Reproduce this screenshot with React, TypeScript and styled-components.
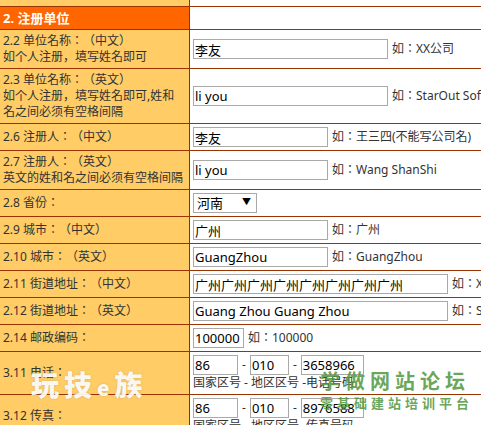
import styled, { createGlobalStyle } from "styled-components";

const FONT = `"Noto Sans", "Noto Sans CJK JP", "Noto Sans CJK SC", sans-serif`;

const GlobalStyle = createGlobalStyle`
  html, body {
    margin: 0;
    padding: 0;
    background: #fff;
    overflow: hidden;
  }
  body {
    font-family: ${FONT};
    font-size: 12px;
    color: #333;
    text-spacing-trim: space-all;
  }
  input, select {
    text-spacing-trim: space-all;
  }
`;

const Page = styled.div`
  position: relative;
  width: 481px;
  height: 425px;
  overflow: hidden;
`;

const FormTable = styled.section`
  display: grid;
  grid-template-columns: 189px 560px;
  gap: 1px;
  padding: 1px;
  margin: -17px 0 0 -1px;
  width: max-content;
  background-color: #993300;
`;

const Label = styled.div<{ $head?: boolean }>`
  display: flex;
  flex-direction: column;
  justify-content: center;
  min-height: 16px;
  padding: 3px;
  line-height: 16px;
  background-color: ${({ $head }) => ($head ? "#ff6600" : "#ffcc66")};
  color: ${({ $head }) => ($head ? "#fff" : "#333")};
  font-size: ${({ $head }) => ($head ? "13px" : "12px")};
  font-weight: ${({ $head }) => ($head ? "bold" : "normal")};
`;

const Field = styled.div`
  display: flex;
  flex-direction: column;
  justify-content: center;
  padding: 3px;
  background-color: #fff;
  line-height: 16px;
  white-space: nowrap;
`;

const Line = styled.div`
  display: flex;
  align-items: center;
  gap: 4px;
`;

const TextBox = styled.input<{ $w: number }>`
  box-sizing: border-box;
  width: ${({ $w }) => $w}px;
  height: 20px;
  margin: 0;
  padding: 0 1px;
  border: 1px solid #a9a9a9;
  background: #fff;
  color: #000;
  font-family: ${FONT};
  font-size: 13px;
  outline: none;
`;

const SelectWrap = styled.span`
  position: relative;
  display: inline-flex;
`;

const Select = styled.select`
  box-sizing: border-box;
  width: 64px;
  height: 20px;
  margin: 0;
  padding: 0 3px;
  border: 1px solid #a9a9a9;
  border-radius: 0;
  background: #fff;
  color: #000;
  font-family: ${FONT};
  font-size: 13px;
  appearance: none;
  outline: none;
`;

const Arrow = styled.span`
  position: absolute;
  right: 6px;
  top: 4px;
  font-size: 9px;
  line-height: 10px;
  color: #000;
  pointer-events: none;
`;

const Hint = styled.span`
  color: #333;
  font-size: 12px;
`;

const BrandMark = styled.div`
  position: absolute;
  left: 31px;
  top: 364px;
  font-family: "Noto Sans CJK SC", sans-serif;
  font-size: 28px;
  font-weight: 900;
  letter-spacing: 5px;
  color: rgba(255, 255, 255, 0.92);
  text-shadow: 0 0 2px rgba(120, 120, 120, 0.35);

  small {
    font-size: 21px;
  }
`;

const SiteMark = styled.div`
  position: absolute;
  left: 320px;
  top: 368px;
  font-family: "Noto Sans CJK SC", sans-serif;
  color: rgba(80, 150, 60, 0.85);
  font-weight: bold;
`;

const SiteTitle = styled.div`
  font-size: 20px;
  line-height: 26px;
  letter-spacing: 5px;
`;

const SiteSub = styled.div`
  font-size: 13px;
  line-height: 18px;
  letter-spacing: 4px;
`;

type Row = {
  label: string[];
  field: React.ReactNode;
};

const rows: Row[] = [
  {
    label: ["2.2 单位名称：（中文）", "如个人注册，填写姓名即可"],
    field: (
      <Line>
        <TextBox $w={195} defaultValue="李友" />
        <Hint>如：XX公司</Hint>
      </Line>
    ),
  },
  {
    label: ["2.3 单位名称：（英文）", "如个人注册，填写姓名即可,姓和", "名之间必须有空格间隔"],
    field: (
      <Line>
        <TextBox $w={195} defaultValue="li you" />
        <Hint>如：StarOut Software</Hint>
      </Line>
    ),
  },
  {
    label: ["2.6 注册人：（中文）"],
    field: (
      <Line>
        <TextBox $w={135} defaultValue="李友" />
        <Hint>如：王三四(不能写公司名)</Hint>
      </Line>
    ),
  },
  {
    label: ["2.7 注册人：（英文）", "英文的姓和名之间必须有空格间隔"],
    field: (
      <Line>
        <TextBox $w={135} defaultValue="li you" />
        <Hint>如：Wang ShanShi</Hint>
      </Line>
    ),
  },
  {
    label: ["2.8 省份："],
    field: (
      <Line>
        <SelectWrap>
          <Select defaultValue="河南">
            <option>河南</option>
            <option>广东</option>
          </Select>
          <Arrow>▼</Arrow>
        </SelectWrap>
      </Line>
    ),
  },
  {
    label: ["2.9 城市：（中文）"],
    field: (
      <Line>
        <TextBox $w={135} defaultValue="广州" />
        <Hint>如：广州</Hint>
      </Line>
    ),
  },
  {
    label: ["2.10 城市：（英文）"],
    field: (
      <Line>
        <TextBox $w={135} defaultValue="GuangZhou" />
        <Hint>如：GuangZhou</Hint>
      </Line>
    ),
  },
  {
    label: ["2.11 街道地址：（中文）"],
    field: (
      <Line>
        <TextBox $w={255} defaultValue="广州广州广州广州广州广州广州广州" />
        <Hint>如：XX市XX区XX路XX号</Hint>
      </Line>
    ),
  },
  {
    label: ["2.12 街道地址：（英文）"],
    field: (
      <Line>
        <TextBox $w={255} defaultValue="Guang Zhou Guang Zhou" />
        <Hint>如：Shiqiao Road</Hint>
      </Line>
    ),
  },
  {
    label: ["2.14 邮政编码："],
    field: (
      <Line>
        <TextBox $w={51} defaultValue="100000" />
        <Hint>如：100000</Hint>
      </Line>
    ),
  },
  {
    label: ["3.11 电话："],
    field: (
      <>
        <Line>
          <TextBox $w={45} defaultValue="86" />
          <Hint>-</Hint>
          <TextBox $w={39} defaultValue="010" />
          <Hint>-</Hint>
          <TextBox $w={63} defaultValue="3658966" />
        </Line>
        <Hint>国家区号 - 地区区号 -电话号码</Hint>
      </>
    ),
  },
  {
    label: ["3.12 传真："],
    field: (
      <>
        <Line>
          <TextBox $w={45} defaultValue="86" />
          <Hint>-</Hint>
          <TextBox $w={39} defaultValue="010" />
          <Hint>-</Hint>
          <TextBox $w={63} defaultValue="8976588" />
        </Line>
        <Hint>国家区号 - 地区区号 -传真号码</Hint>
      </>
    ),
  },
];

const App = () => {
  return (
    <Page>
      <GlobalStyle />
      <FormTable>
        <Label>&nbsp;</Label>
        <Field>&nbsp;</Field>
        <Label $head>2. 注册单位</Label>
        <Field />
        {rows.map((row, idx) => (
          <>
            <Label key={`l${idx}`}>
              {row.label.map((text, i) => (
                <span key={i}>{text}</span>
              ))}
            </Label>
            <Field key={`f${idx}`}>{row.field}</Field>
          </>
        ))}
      </FormTable>
      <BrandMark>
        玩技<small>e</small>族
      </BrandMark>
      <SiteMark>
        <SiteTitle>学做网站论坛</SiteTitle>
        <SiteSub>零基础建站培训平台</SiteSub>
      </SiteMark>
    </Page>
  );
};

export default App;
